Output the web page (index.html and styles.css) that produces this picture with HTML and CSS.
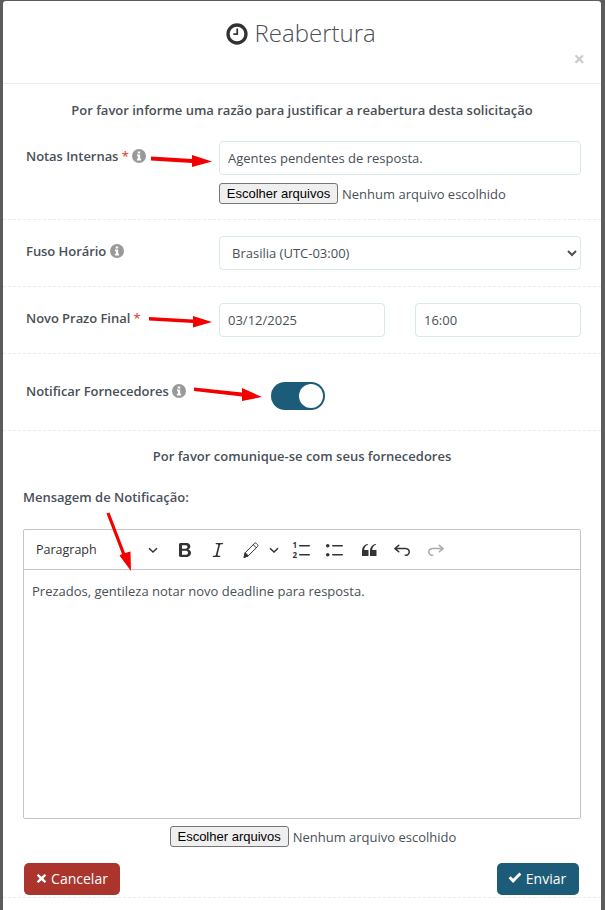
FILE: index.html
```html
<!DOCTYPE html>
<html lang="pt-BR">
<head>
  <meta charset="UTF-8" />
  <meta name="viewport" content="width=device-width, initial-scale=1.0" />
  <title>Reabertura</title>
  <link rel="stylesheet" href="styles.css">
</head>
<body>
  <div class="modal">
    <div class="modal-header">
      <h2 class="modal-title">
        <svg class="title-icon" viewBox="0 0 24 24" width="22" height="22">
          <circle cx="12" cy="12" r="9.8" fill="none" stroke="#333" stroke-width="3.6"/>
          <path d="M13.2 6v7.2H8v-1.9h3.3V6z" fill="#333"/>
        </svg>
        Reabertura
      </h2>
      <span class="close">×</span>
    </div>

    <div class="modal-body">
      <p class="intro">Por favor informe uma razão para justificar a reabertura desta solicitação</p>

      <div class="form-row row-notes">
        <label class="field-label">Notas Internas <span class="req">*</span>
          <svg class="info" viewBox="0 0 14 14" width="14" height="14"><circle cx="7" cy="7" r="7" fill="#999"/><path d="M5.7 2.4h2.5v2H5.7zM5 5.6h3.2v4.2h.9V11.500H4.900V9.800h1V7.300H5z" fill="#fff"/></svg>
        </label>
        <div class="field">
          <input class="input" type="text" value="Agentes pendentes de resposta.">
          <div class="file-line">
            <button class="file-btn" type="button">Escolher arquivos</button>
            <span class="file-name">Nenhum arquivo escolhido</span>
          </div>
        </div>
      </div>

      <div class="form-row">
        <label class="field-label">Fuso Horário
          <svg class="info" viewBox="0 0 14 14" width="14" height="14"><circle cx="7" cy="7" r="7" fill="#999"/><path d="M5.7 2.4h2.5v2H5.7zM5 5.6h3.2v4.2h.9V11.500H4.900V9.800h1V7.300H5z" fill="#fff"/></svg>
        </label>
        <div class="field">
          <select class="input select">
            <option>Brasilia (UTC-03:00)</option>
          </select>
        </div>
      </div>

      <div class="form-row">
        <label class="field-label">Novo Prazo Final <span class="req">*</span></label>
        <div class="field field-pair">
          <input class="input" type="text" value="03/12/2025">
          <input class="input" type="text" value="16:00">
        </div>
      </div>

      <div class="form-row row-toggle">
        <label class="field-label">Notificar Fornecedores
          <svg class="info" viewBox="0 0 14 14" width="14" height="14"><circle cx="7" cy="7" r="7" fill="#999"/><path d="M5.7 2.4h2.500v2H5.700zM5 5.600h3.200v4.200h.9V11.500H4.900V9.800h1V7.300H5z" fill="#fff"/></svg>
        </label>
        <div class="toggle"><span class="toggle-knob"></span></div>
      </div>

      <p class="intro intro-second">Por favor comunique-se com seus fornecedores</p>

      <div class="message">
        <h4 class="message-label">Mensagem de Notificação:</h4>
        <div class="editor">
          <div class="toolbar">
            <div class="tool-heading">
              <span>Paragraph</span>
              <svg viewBox="0 0 10 10" width="10" height="10"><path d="M1 3.200l4 3.800 4-3.800" fill="none" stroke="#333" stroke-width="1.500"/></svg>
            </div>
            <button class="tool" type="button"><svg viewBox="0 0 20 20" width="20" height="20"><path d="M10.187 17H5.773c-.637 0-1.092-.138-1.364-.415-.273-.277-.409-.718-.409-1.323V4.738c0-.617.14-1.062.419-1.332.279-.27.73-.406 1.354-.406h4.680c.69 0 1.288.041 1.793.124.506.083.96.242 1.360.478.341.197.644.447.906.75a3.262 3.262 0 0 1 .808 2.162c0 1.401-.722 2.426-2.167 3.075C15.050 10.175 16 11.315 16 13.010a3.756 3.756 0 0 1-2.296 3.504 6.100 6.100 0 0 1-1.517.377c-.571.073-1.238.11-2 .11zm-.217-6.217H7v4.087h3.069c1.977 0 2.965-.69 2.965-2.072 0-.707-.256-1.220-.768-1.537-.512-.319-1.277-.478-2.296-.478zM7 5.130v3.619h2.606c.729 0 1.292-.067 1.690-.2a1.600 1.600 0 0 0 .91-.765c.165-.267.247-.566.247-.897 0-.707-.26-1.176-.778-1.409-.519-.232-1.310-.348-2.375-.348H7z" fill="#333"/></svg></button>
            <button class="tool" type="button"><svg viewBox="0 0 20 20" width="20" height="20"><path d="m9.586 14.633.021.004c-.036.335.095.655.393.962.082.083.173.15.274.201h1.474a.6.6 0 1 1 0 1.200H5.304a.6.6 0 0 1 0-1.200h1.150c.474-.07.809-.182 1.005-.334.157-.122.291-.32.404-.597l2.416-9.550a1.053 1.053 0 0 0-.281-.823 1.120 1.120 0 0 0-.442-.296H8.150a.6.6 0 0 1 0-1.200h6.443a.6.6 0 1 1 0 1.200h-1.195c-.376.056-.65.155-.823.296-.215.175-.423.439-.623.79l-2.366 9.347z" fill="#333"/></svg></button>
            <button class="tool tool-split" type="button">
              <svg viewBox="0 0 20 20" width="20" height="20"><path d="M3 17.500l1.200-4.800L13.500 3.400a1.300 1.300 0 0 1 1.800 0l1.300 1.300a1.300 1.300 0 0 1 0 1.800L7.300 15.800z" fill="none" stroke="#333" stroke-width="1"/><path d="M3 17.500l1.200-4.800 3.100 3.100zM12.200 4.700l3.100 3.100" fill="#333" stroke="#333" stroke-width="1"/></svg>
              <svg viewBox="0 0 10 10" width="10" height="10"><path d="M1 3.200l4 3.800 4-3.800" fill="none" stroke="#333" stroke-width="1.500"/></svg>
            </button>
            <button class="tool" type="button"><svg viewBox="0 0 20 20" width="20" height="20"><rect x="7" y="5" width="11" height="1.500" rx=".7" fill="#333"/><rect x="7" y="14" width="11" height="1.500" rx=".7" fill="#333"/><text x="0.500" y="8" class="list-num">1</text><text x="0.500" y="18" class="list-num">2</text></svg></button>
            <button class="tool" type="button"><svg viewBox="0 0 20 20" width="20" height="20"><path d="M7 5.750c0 .414.336.75.75.75h9.500a.75.75 0 1 0 0-1.500h-9.500a.75.75 0 0 0-.75.75zm-6 0C1 4.784 1.777 4 2.750 4c.966 0 1.750.777 1.750 1.750 0 .966-.777 1.750-1.750 1.750C1.784 7.500 1 6.723 1 5.750zm6 9c0 .414.336.75.75.75h9.500a.75.75 0 1 0 0-1.500h-9.500a.75.75 0 0 0-.75.75zm-6 0c0-.966.777-1.750 1.750-1.750.966 0 1.750.777 1.750 1.750 0 .966-.777 1.750-1.750 1.750-.966 0-1.750-.777-1.750-1.750z" fill="#333"/></svg></button>
            <button class="tool" type="button"><svg viewBox="0 0 20 20" width="20" height="20"><path d="M3 10.423a6.500 6.500 0 0 1 6.056-6.408l.038.67C6.448 5.423 5.354 7.663 5.220 10H9c.552 0 .5.432.5.986v4.511c0 .554-.448.503-1 .503h-5c-.552 0-.5-.449-.5-1.003v-4.574zm8 0a6.500 6.500 0 0 1 6.056-6.408l.038.67c-2.646.739-3.740 2.979-3.873 5.315H17c.552 0 .5.432.5.986v4.511c0 .554-.448.503-1 .503h-5c-.552 0-.5-.449-.5-1.003v-4.574z" fill="#333"/></svg></button>
            <button class="tool" type="button"><svg viewBox="0 0 20 20" width="20" height="20"><path d="m5.042 9.367 2.189 1.837a.75.75 0 0 1-.965 1.149l-3.788-3.180a.747.747 0 0 1-.21-.284.75.75 0 0 1 .17-.945L6.230 4.762a.75.75 0 1 1 .964 1.150L4.863 7.866h8.917A.75.75 0 0 1 14 7.900a4 4 0 1 1-1.477 7.718l.344-1.489a2.500 2.500 0 1 0 1.094-4.730l.008-.032H5.042z" fill="#333"/></svg></button>
            <button class="tool" type="button"><svg viewBox="0 0 20 20" width="20" height="20"><path d="m14.958 9.367-2.189 1.837a.75.75 0 0 0 .965 1.149l3.788-3.180a.747.747 0 0 0 .21-.284.75.75 0 0 0-.17-.945L13.770 4.762a.75.75 0 1 0-.964 1.150l2.331 1.955H6.220A.75.75 0 0 0 6 7.900a4 4 0 1 0 1.477 7.718l-.344-1.489A2.500 2.500 0 1 1 6.039 9.400l-.008-.032h8.927z" fill="#aaa"/></svg></button>
          </div>
          <div class="editor-text">
            <p>Prezados, gentileza notar novo deadline para resposta.</p>
          </div>
        </div>
        <div class="file-line file-line-center">
          <button class="file-btn" type="button">Escolher arquivos</button>
          <span class="file-name">Nenhum arquivo escolhido</span>
        </div>
      </div>

      <div class="actions">
        <button class="btn btn-cancel" type="button">
          <svg viewBox="0 0 12 12" width="11" height="11"><path d="M2.600 1l3.400 3.100L9.400 1 11.200 2.800 8.100 6l3.100 3.200-1.800 1.800L6 7.900 2.600 11 .8 9.200 3.900 6 .8 2.800z" fill="#fff"/></svg>
          Cancelar
        </button>
        <button class="btn btn-send" type="button">
          <svg viewBox="0 0 14 12" width="14" height="12"><path d="M.6 6.200l2-2 2.500 2.500L11.400.6l2 2-8.300 8.500z" fill="#fff"/></svg>
          Enviar
        </button>
      </div>
    </div>
  </div>

  <!-- setas vermelhas desenhadas por cima do print -->
  <svg class="arrows" viewBox="0 0 605 910" width="605" height="910">
    <path d="M151 156.500L192 159V155L212 161.500L192 167V163L151 160.500z" fill="#f30000"/>
    <path d="M149 317L193 319.500V316L212 322L193 327.500V323L149 320.500z" fill="#f30000"/>
    <path d="M194 387.500L242 392.500V388L262 397L242 401V396.500L194 391z" fill="#f30000"/>
    <path d="M106.500 513.500L109.500 512.500L125 553L130.500 551.500L131 571L119.500 555.500L122 554z" fill="#f30000"/>
  </svg>
</body>
</html>
```

FILE: styles.css
```css
html, body {
  height: 100%;
}
body {
  font-family: 'Open Sans', 'Noto Sans', sans-serif;
  font-size: 13px;
  color: #495057;
  background: #5c5c5c;
  margin: 0;
  padding: 0;
  overflow: hidden;
  position: relative;
}
.modal {
  background: #fff;
  margin: 1px 4px 0 3px;
  height: 909px;
  border-radius: 3px 3px 0 0;
  overflow: hidden;
}
.modal-header {
  height: 82px;
  border-bottom: 1px solid #e6eeee;
  position: relative;
  text-align: center;
}
.modal-title {
  margin: 0;
  padding-top: 16px;
  padding-right: 2px;
  font-size: 24px;
  font-weight: 300;
  line-height: 31px;
  color: #495057;
}
.title-icon {
  vertical-align: -3px;
}
.close {
  position: absolute;
  right: 16px;
  top: 48px;
  font-size: 20px;
  line-height: 20px;
  font-weight: 700;
  color: #ccc;
}
.modal-body {
  padding: 0 20px 0 20px;
}
.intro {
  margin: 0;
  padding-top: 17px;
  height: 40px;
  line-height: 18px;
  font-weight: 600;
  text-align: center;
  color: #495057;
  box-sizing: border-box;
}
.intro-second {
  padding-top: 16px;
  height: 44px;
}
.form-row {
  display: flex;
  align-items: flex-start;
  padding: 16px 20px 16px 23px;
  margin: 0 -20px;
  border-bottom: 1px dashed #e6eeee;
}
.row-notes {
  padding-top: 17px;
  padding-bottom: 15px;
}
.row-notes .file-line {
  margin-top: 8px;
}
.row-toggle {
  padding: 28px 20px 20px 23px;
}
.field-label {
  width: 193px;
  flex: none;
  font-weight: 600;
  line-height: 18px;
  letter-spacing: -0.05px;
  padding-top: 6px;
  color: #495057;
}
.row-toggle .field-label {
  width: auto;
  padding-top: 0;
}
.req {
  color: #e0564f;
}
.info {
  vertical-align: -2px;
}
.field {
  flex: 1;
  min-width: 0;
}
.field-pair {
  display: flex;
  gap: 30px;
}
.input {
  display: block;
  width: 100%;
  height: 34px;
  box-sizing: border-box;
  padding: 0 8px;
  font-family: inherit;
  font-size: 13px;
  color: #495057;
  background: #fff;
  border: 1px solid #d9e8e8;
  border-radius: 4px;
  outline: none;
}
.file-line {
  display: flex;
  align-items: center;
  gap: 4px;
  margin-top: 7px;
}
.file-line-center {
  justify-content: center;
  padding-left: 22px;
}
.file-btn {
  font-family: 'Liberation Sans', Arial, sans-serif;
  font-size: 13px;
  height: 21px;
  width: 119px;
  padding: 0;
  color: #000;
  background: #efefef;
  border: 1px solid #767676;
  border-radius: 3px;
}
.file-name {
  color: #495057;
}
.toggle {
  width: 54px;
  height: 28px;
  flex: none;
  box-sizing: border-box;
  margin-left: 85px;
  padding: 2px;
  background: #1d5c78;
  border-radius: 14px;
  display: flex;
  justify-content: flex-end;
}
.toggle-knob {
  display: block;
  width: 24px;
  height: 24px;
  background: #fff;
  border-radius: 50%;
}
.message {
  padding-top: 13px;
  padding-bottom: 16px;
}
.message-label {
  margin: 0 0 23px 0;
  font-size: 13px;
  font-weight: 600;
  line-height: 18px;
  color: #495057;
}
.editor {
  border: 1px solid #c4c4c4;
  border-radius: 2px;
  height: 290px;
  box-sizing: border-box;
}
.toolbar {
  display: flex;
  align-items: center;
  height: 39px;
  border-bottom: 1px solid #c4c4c4;
}
.tool-heading {
  width: 144px;
  flex: none;
  box-sizing: border-box;
  display: flex;
  align-items: center;
  justify-content: space-between;
  padding: 0 10px 0 12px;
  font-size: 12.5px;
  color: #333;
}
.tool {
  width: 33.5px;
  height: 30px;
  flex: none;
  padding: 0;
  display: flex;
  align-items: center;
  justify-content: center;
  background: none;
  border: none;
}
.tool-split {
  width: 50px;
  justify-content: flex-start;
  padding-left: 6px;
  gap: 8px;
  box-sizing: border-box;
}
.list-num {
  font-family: 'Open Sans', sans-serif;
  font-size: 8px;
  font-weight: 700;
  fill: #333;
}
.editor-text {
  padding: 0 8px;
  font-size: 13px;
}
.editor-text p {
  margin: 0;
  padding-top: 12px;
  line-height: 18px;
}
.actions {
  display: flex;
  justify-content: space-between;
  padding: 0 22px 2px 21px;
  margin: 0 -20px;
  border-bottom: 1px dashed #e6eeee;
}
.btn {
  height: 32px;
  padding: 0 0 2px 0;
  font-family: inherit;
  font-size: 14px;
  color: #fff;
  border: none;
  border-radius: 5px;
  display: flex;
  align-items: center;
  justify-content: center;
  gap: 4px;
}
.btn-cancel {
  width: 96px;
  background: #ab342d;
}
.btn-send {
  width: 82px;
  padding-right: 2px;
  background: #1d5c78;
}
.arrows {
  position: absolute;
  top: 0;
  left: 0;
  pointer-events: none;
}
```
